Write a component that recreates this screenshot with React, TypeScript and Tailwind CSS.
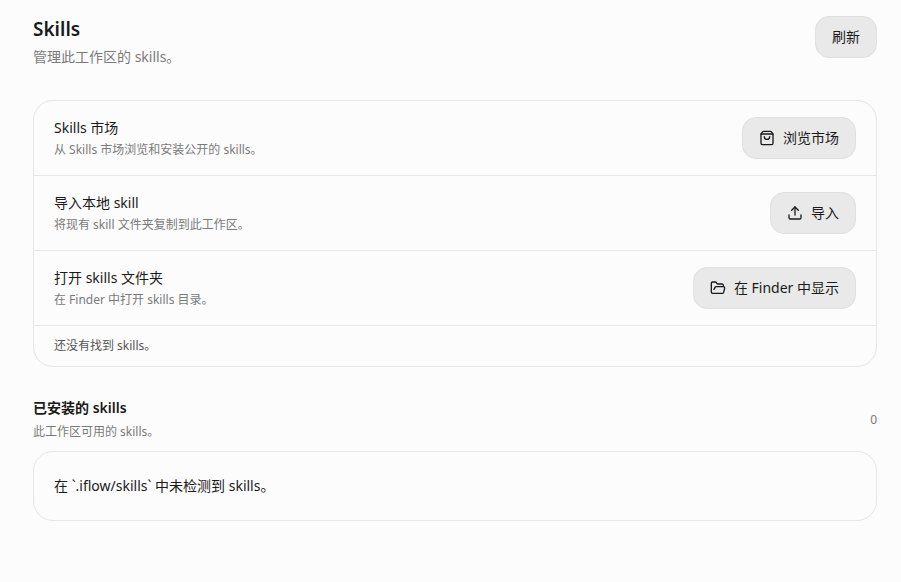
import { FolderOpen, ShoppingBag, Upload } from 'lucide-react';

const rows = [
  { title: 'Skills 市场', desc: '从 Skills 市场浏览和安装公开的 skills。', action: '浏览市场', icon: ShoppingBag },
  { title: '导入本地 skill', desc: '将现有 skill 文件夹复制到此工作区。', action: '导入', icon: Upload },
  { title: '打开 skills 文件夹', desc: '在 Finder 中打开 skills 目录。', action: '在 Finder 中显示', icon: FolderOpen },
];

export default function App() {
  return (
    <div className="min-h-[582px] bg-[#fcfcfc] pl-[33px] pr-6 pt-4 text-[#1a1a1a] font-['Noto_Sans','Noto_Sans_CJK_SC',sans-serif]">
      <div className="flex items-start justify-between">
        <div>
          <h1 className="text-[19px] leading-[26px] font-semibold">Skills</h1>
          <p className="mt-[5px] text-sm leading-5 text-[#7a7a7a]">管理此工作区的 skills。</p>
        </div>
        <button className="h-[42px] rounded-[14px] border border-[#e0e0e0] bg-[#e9e9e9] px-4 text-sm">刷新</button>
      </div>

      {/* 操作列表 */}
      <div className="mt-[33px] rounded-[20px] border border-[#e6e6e6]">
        {rows.map((row) => (
          <div key={row.action} className="flex h-[75px] items-center justify-between border-b border-[#e6e6e6] px-5">
            <div className="pt-[2px]">
              <div className="text-sm leading-5">{row.title}</div>
              <div className="mt-[2px] text-xs leading-5 text-[#7a7a7a]">{row.desc}</div>
            </div>
            <button className="flex h-[42px] items-center gap-2 rounded-[14px] border border-[#e0e0e0] bg-[#e9e9e9] px-4 text-sm">
              <row.icon size={16} strokeWidth={2} />
              {row.action}
            </button>
          </div>
        ))}
        <div className="flex h-10 items-center pl-5 text-xs text-[#555555]">还没有找到 skills。</div>
      </div>

      {/* 已安装 */}
      <div className="mt-[31px] flex items-center justify-between">
        <div>
          <h2 className="text-sm leading-5 font-semibold">已安装的 skills</h2>
          <p className="mt-[4px] text-xs leading-5 text-[#7a7a7a]">此工作区可用的 skills。</p>
        </div>
        <span className="text-xs text-[#7a7a7a]">0</span>
      </div>
      <div className="mt-[9px] flex h-[70px] items-center rounded-[20px] border border-[#e6e6e6] pl-5 text-sm">
        在 `.iflow/skills` 中未检测到 skills。
      </div>
    </div>
  );
}
